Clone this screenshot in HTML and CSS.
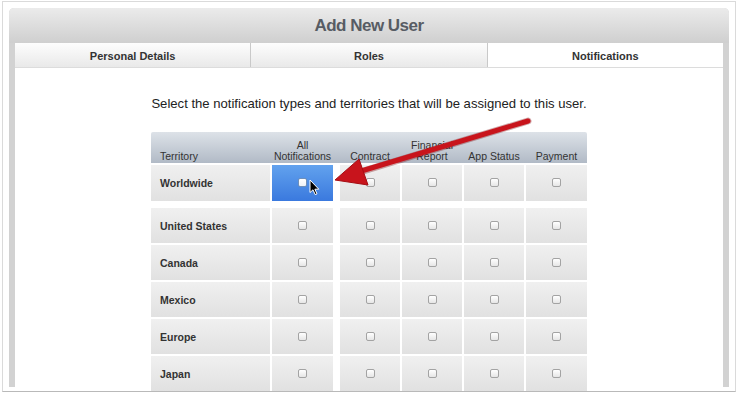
FILE: index.html
```html
<!DOCTYPE html>
<html lang="en">
<head>
    <meta charset="UTF-8">
    <meta name="viewport" content="width=device-width, initial-scale=1.0">
    <title>Add New User</title>
    <link rel="stylesheet" href="styles.css">
</head>
<body>
    <div class="frame">
        <div class="panel">
            <div class="panel-head">Add New User</div>
            <div class="panel-body">
                <div class="tabs">
                    <div class="tab">Personal Details</div>
                    <div class="tab">Roles</div>
                    <div class="tab active">Notifications</div>
                </div>
                <div class="content">
                    <p class="intro">Select the notification types and territories that will be assigned to this user.</p>
                    <div class="grid">
                        <div class="grid-head">
                            <div class="hc c-terr">Territory</div>
                            <div class="hc c-all">All<br>Notifications</div>
                            <div class="hc c-col">Contract</div>
                            <div class="hc c-col">Financial<br>Report</div>
                            <div class="hc c-col">App Status</div>
                            <div class="hc c-last">Payment</div>
                        </div>
                        <div class="row first">
                            <div class="cell c-terr">Worldwide</div>
                            <div class="cell c-all selected"><span class="box"></span></div>
                            <div class="cell c-col"><span class="box"></span></div>
                            <div class="cell c-col"><span class="box"></span></div>
                            <div class="cell c-col"><span class="box"></span></div>
                            <div class="cell c-last"><span class="box"></span></div>
                        </div>
                        <div class="row">
                            <div class="cell c-terr">United States</div>
                            <div class="cell c-all"><span class="box"></span></div>
                            <div class="cell c-col"><span class="box"></span></div>
                            <div class="cell c-col"><span class="box"></span></div>
                            <div class="cell c-col"><span class="box"></span></div>
                            <div class="cell c-last"><span class="box"></span></div>
                        </div>
                        <div class="row">
                            <div class="cell c-terr">Canada</div>
                            <div class="cell c-all"><span class="box"></span></div>
                            <div class="cell c-col"><span class="box"></span></div>
                            <div class="cell c-col"><span class="box"></span></div>
                            <div class="cell c-col"><span class="box"></span></div>
                            <div class="cell c-last"><span class="box"></span></div>
                        </div>
                        <div class="row">
                            <div class="cell c-terr">Mexico</div>
                            <div class="cell c-all"><span class="box"></span></div>
                            <div class="cell c-col"><span class="box"></span></div>
                            <div class="cell c-col"><span class="box"></span></div>
                            <div class="cell c-col"><span class="box"></span></div>
                            <div class="cell c-last"><span class="box"></span></div>
                        </div>
                        <div class="row">
                            <div class="cell c-terr">Europe</div>
                            <div class="cell c-all"><span class="box"></span></div>
                            <div class="cell c-col"><span class="box"></span></div>
                            <div class="cell c-col"><span class="box"></span></div>
                            <div class="cell c-col"><span class="box"></span></div>
                            <div class="cell c-last"><span class="box"></span></div>
                        </div>
                        <div class="row">
                            <div class="cell c-terr">Japan</div>
                            <div class="cell c-all"><span class="box"></span></div>
                            <div class="cell c-col"><span class="box"></span></div>
                            <div class="cell c-col"><span class="box"></span></div>
                            <div class="cell c-col"><span class="box"></span></div>
                            <div class="cell c-last"><span class="box"></span></div>
                        </div>
                    </div>
                </div>
            </div>
        </div>
    </div>

    <!-- annotation arrow drawn over the screenshot -->
    <svg class="callout" width="738" height="395" viewBox="0 0 738 395">
        <line x1="528" y1="121" x2="360" y2="172" stroke="#7d0a0e" stroke-width="7" stroke-linecap="round" opacity="0.35"/>
        <line x1="528" y1="121" x2="358" y2="172" stroke="#c8141c" stroke-width="5" stroke-linecap="round"/>
        <polygon points="335,180 359,159 368,185" fill="#c8141c" stroke="#a50d13" stroke-width="1" stroke-linejoin="round"/>
    </svg>

    <svg class="pointer" width="12" height="17" viewBox="0 0 12 17">
        <path d="M1 1 L1 13.5 L4 10.8 L6.2 15.6 L8 14.8 L5.9 10.2 L9.8 10.2 Z" fill="#000" stroke="#fff" stroke-width="1" stroke-linejoin="round"/>
    </svg>
</body>
</html>
```

FILE: styles.css
```css
body {
    margin: 0;
    font-family: "Liberation Sans", Arial, sans-serif;
    background: #fff;
    position: relative;
}
.frame {
    box-sizing: border-box;
    margin: 1px 2px 0;
    height: 391px;
    padding: 6px 6px 0;
    border: 1px solid #dadada;
    border-bottom-color: #b9b9b9;
    overflow: hidden;
}
.panel {
    height: 379px;
    background: #d2d2d2;
    border-radius: 5px 5px 0 0;
    display: flex;
    flex-direction: column;
}
.panel-head {
    height: 35px;
    line-height: 35px;
    text-align: center;
    font-size: 17px;
    font-weight: bold;
    letter-spacing: -0.5px;
    color: #575c64;
    border-radius: 5px 5px 0 0;
    background: linear-gradient(#ebebeb, #cfcfcf);
}
.panel-body {
    flex: 1;
    margin: 0 6px;
    background: #fff;
}
.tabs {
    display: flex;
    height: 25px;
    border-bottom: 1px solid #dcdcdc;
    box-sizing: border-box;
}
.tab {
    flex: 1;
    text-align: center;
    line-height: 26px;
    font-size: 11px;
    font-weight: bold;
    color: #333;
    background: linear-gradient(#fdfdfd, #e9e9e9);
    border-left: 1px solid #c9c9c9;
}
.tab:first-child {
    border-left: none;
}
.tab.active {
    background: #fff;
}
.intro {
    margin: 28px 0 0;
    text-align: center;
    font-size: 13.1px;
    line-height: 16px;
    color: #222;
}
.grid {
    width: 436px;
    margin: 20px auto 0;
}
.grid-head {
    display: flex;
    gap: 2px;
    height: 31px;
    margin-bottom: 2px;
    background: linear-gradient(#dde2e8, #b1bac6);
    border-radius: 2px 2px 0 0;
}
.hc {
    display: flex;
    align-items: flex-end;
    justify-content: center;
    text-align: center;
    padding-bottom: 1px;
    font-size: 10.5px;
    line-height: 11px;
    color: #333;
}
.hc.c-terr {
    justify-content: flex-start;
    padding-left: 9px;
}
.c-terr {
    width: 119px;
    box-sizing: border-box;
}
.c-all {
    width: 61px;
    margin-right: 5px;
}
.c-col {
    width: 60px;
}
.c-last {
    width: 61px;
}
.row {
    display: flex;
    gap: 2px;
    height: 35px;
    margin-bottom: 2px;
}
.row.first {
    height: 36px;
    margin-bottom: 7px;
}
.cell {
    display: flex;
    align-items: center;
    justify-content: center;
    background: linear-gradient(#f0f0f0, #e1e1e1);
}
.cell.c-terr {
    justify-content: flex-start;
    padding-left: 9px;
    font-size: 10.5px;
    font-weight: bold;
    color: #333;
}
.cell.selected {
    background: linear-gradient(#62a2ee, #3a79de);
}
.box {
    width: 7px;
    height: 7px;
    border: 1px solid #a3a3a3;
    border-radius: 2px;
    background: linear-gradient(#fff, #e6e6e6);
    margin-top: -1px;
}
.selected .box {
    border-color: #6f8fb8;
    background: linear-gradient(#fff, #eef2f7);
}
.callout {
    position: absolute;
    left: 0;
    top: 0;
    pointer-events: none;
}
.pointer {
    position: absolute;
    left: 309px;
    top: 179px;
    pointer-events: none;
}
```
